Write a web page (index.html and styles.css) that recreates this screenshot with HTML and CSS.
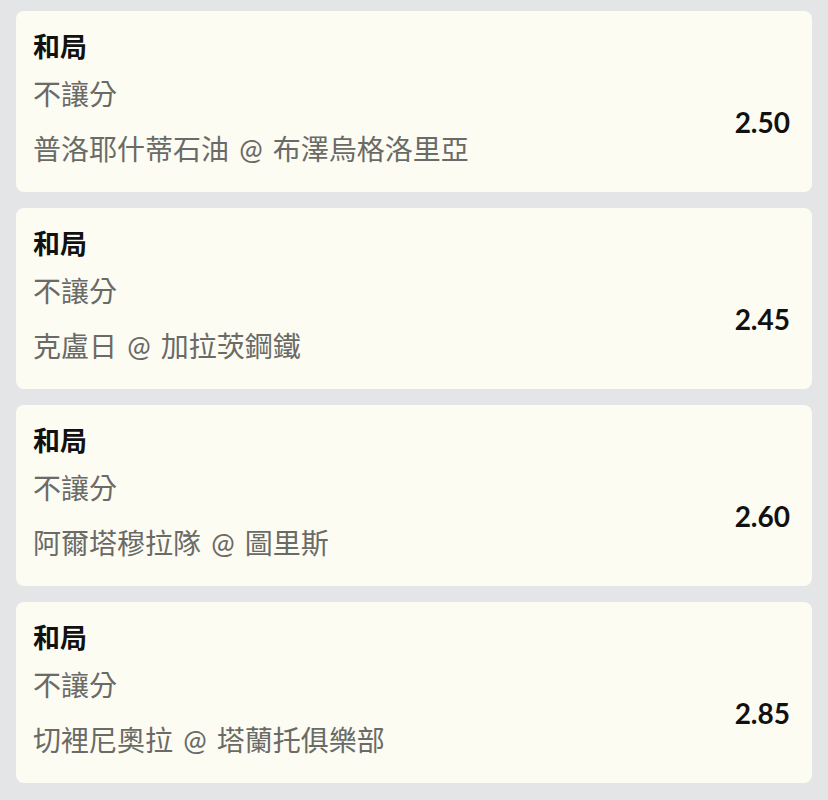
FILE: index.html
```html
<!DOCTYPE html>
<html lang="zh-Hant">

<head>
    <meta charset="UTF-8">
    <meta name="viewport" content="width=device-width, initial-scale=1.0">
    <title>和局賠率</title>
    <link rel="stylesheet" href="styles.css">
</head>

<body>
    <div class="bet-list">
        <div class="bet-card">
            <div class="bet-title">和局</div>
            <div class="bet-body">
                <div class="bet-info">
                    <div class="bet-market">不讓分</div>
                    <div class="bet-match">普洛耶什蒂石油 @ 布澤烏格洛里亞</div>
                </div>
                <div class="bet-odds">2.50</div>
            </div>
        </div>
        <div class="bet-card">
            <div class="bet-title">和局</div>
            <div class="bet-body">
                <div class="bet-info">
                    <div class="bet-market">不讓分</div>
                    <div class="bet-match">克盧日 @ 加拉茨鋼鐵</div>
                </div>
                <div class="bet-odds">2.45</div>
            </div>
        </div>
        <div class="bet-card">
            <div class="bet-title">和局</div>
            <div class="bet-body">
                <div class="bet-info">
                    <div class="bet-market">不讓分</div>
                    <div class="bet-match">阿爾塔穆拉隊 @ 圖里斯</div>
                </div>
                <div class="bet-odds">2.60</div>
            </div>
        </div>
        <div class="bet-card">
            <div class="bet-title">和局</div>
            <div class="bet-body">
                <div class="bet-info">
                    <div class="bet-market">不讓分</div>
                    <div class="bet-match">切裡尼奧拉 @ 塔蘭托俱樂部</div>
                </div>
                <div class="bet-odds">2.85</div>
            </div>
        </div>
    </div>
</body>

</html>
```

FILE: styles.css
```css
body {
    margin: 0;
    background-color: #e4e5e7;
    font-family: Lato, "Noto Sans CJK TC", sans-serif;
}

.bet-list {
    display: flex;
    flex-direction: column;
    gap: 16px;
    padding: 11px 16px;
}

.bet-card {
    background-color: #fcfcf3;
    border-radius: 8px;
    padding: 20px 22px 27px 17px;
}

.bet-title {
    font-size: 27px;
    font-weight: bold;
    line-height: 32px;
    color: #111;
}

.bet-body {
    display: flex;
    align-items: center;
    justify-content: space-between;
    margin-top: 15px;
}

.bet-market,
.bet-match {
    font-size: 28px;
    line-height: 32px;
    color: #6a6a66;
}

.bet-match {
    margin-top: 23px;
    word-spacing: 3px;
}

.bet-odds {
    font-size: 28px;
    font-weight: bold;
    color: #111;
}
```
